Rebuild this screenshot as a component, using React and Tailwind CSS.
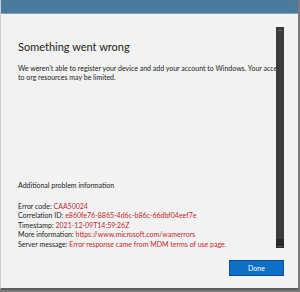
export default function App() {
  const font = { fontFamily: 'Lato, "Liberation Sans", sans-serif' };
  return (
    <div className="w-[300px] h-[292px] bg-[#7a7a7a]" style={font}>
      <div className="w-[298px] h-[290px] flex flex-col bg-[#f2f2f2] border-l border-[#cfcfcf] border-b-2 border-b-[#5e5e5e]">
        <div className="h-[14px] shrink-0 bg-[#4a7b9c] border-b border-[#7fa2b8] flex items-center justify-end pr-[6px]">
          <span className="text-[8px] leading-none text-[#6f9bb7]">&lsaquo;</span>
        </div>
        <div className="h-[237px] shrink-0 flex">
          <div className="flex-1 min-w-0 overflow-hidden pl-[17px] text-[#1b1b1b]">
            <h1 className="mt-[25px] text-[11px] leading-[16px] whitespace-nowrap text-[#222]">Something went wrong</h1>
            <p className="mt-[8.5px] text-[7px] leading-[9px] whitespace-nowrap">
              We weren&rsquo;t able to register your device and add your account to Windows. Your access
              <br />
              to org resources may be limited.
            </p>
            <p className="mt-[99px] text-[7px] leading-[9px] whitespace-nowrap">Additional problem information</p>
            <div className="mt-[12px] text-[7px] leading-[9.5px] whitespace-nowrap">
              <div>Error code: <span className="text-[#c4262e]">CAA50024</span></div>
              <div>Correlation ID: <span className="text-[#c4262e]">e860fe76-8865-4d6c-b86c-66dbf04eef7e</span></div>
              <div>Timestamp: <span className="text-[#c4262e]">2021-12-09T14:59:26Z</span></div>
              <div>More information: <span className="text-[#c4262e]">https://www.microsoft.com/wamerrors</span></div>
              <div>Server message: <span className="text-[#c4262e]">Error response came from MDM terms of use page.</span></div>
            </div>
          </div>
          <div className="mt-[13px] mr-[14px] w-[8px] h-[221px] shrink-0 flex flex-col justify-between bg-[#3b3b3b]">
            <div className="h-[6px] flex items-center justify-center">
              <div className="w-[4px] h-px bg-[#6a6a6a]" />
            </div>
            <div className="h-[9px] bg-[#2a2a2a] flex items-end justify-center pb-[1px]">
              <div className="w-[4px] h-px bg-[#5a5a5a]" />
            </div>
          </div>
        </div>
        <div className="flex justify-end pt-[9px] pr-[14px]">
          <button className="w-[55px] h-[16px] bg-[#0f70c8] border border-[#0a4f94] text-white text-[7px] leading-none">
            Done
          </button>
        </div>
      </div>
    </div>
  );
}
